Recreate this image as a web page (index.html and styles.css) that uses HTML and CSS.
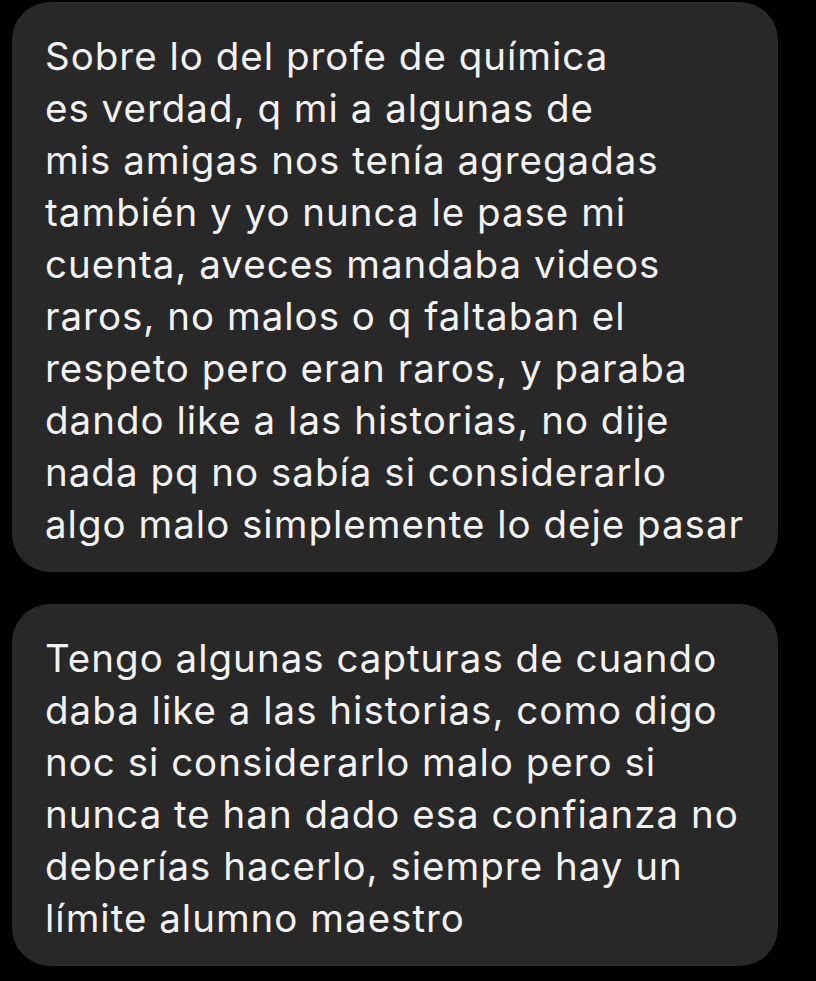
FILE: index.html
```html
<!DOCTYPE html>
<html lang="es">
<head>
  <meta charset="UTF-8">
  <meta name="viewport" content="width=device-width, initial-scale=1.0">
  <title>Mensajes</title>
  <link rel="stylesheet" href="styles.css">
</head>
<body>
  <div class="chat">
    <div class="bubble">
      <p class="line">Sobre lo del profe de química</p>
      <p class="line">es verdad, q mi a algunas de</p>
      <p class="line">mis amigas nos tenía agregadas</p>
      <p class="line">también y yo nunca le pase mi</p>
      <p class="line">cuenta, aveces mandaba videos</p>
      <p class="line">raros, no malos o q faltaban el</p>
      <p class="line">respeto pero eran raros, y paraba</p>
      <p class="line">dando like a las historias, no dije</p>
      <p class="line">nada pq no sabía si considerarlo</p>
      <p class="line">algo malo simplemente lo deje pasar</p>
    </div>
    <div class="bubble">
      <p class="line">Tengo algunas capturas de cuando</p>
      <p class="line">daba like a las historias, como digo</p>
      <p class="line">noc si considerarlo malo pero si</p>
      <p class="line">nunca te han dado esa confianza no</p>
      <p class="line">deberías hacerlo, siempre hay un</p>
      <p class="line">límite alumno maestro</p>
    </div>
  </div>
</body>
</html>
```

FILE: styles.css
```css
html, body {
  margin: 0;
  padding: 0;
  background-color: #000;
}
body {
  font-family: Inter, "Noto Sans", sans-serif;
  color: #f2f2f2;
}
.chat {
  display: flex;
  flex-direction: column;
  gap: 32px;
  padding: 2px 38px 0 12px;
}
.bubble {
  background-color: #282828;
  border-radius: 38px;
  padding: 28px 20px 22px 33px;
}
.line {
  margin: 0;
  font-size: 38.5px;
  line-height: 52px;
  letter-spacing: 1px;
  white-space: nowrap;
}
```
